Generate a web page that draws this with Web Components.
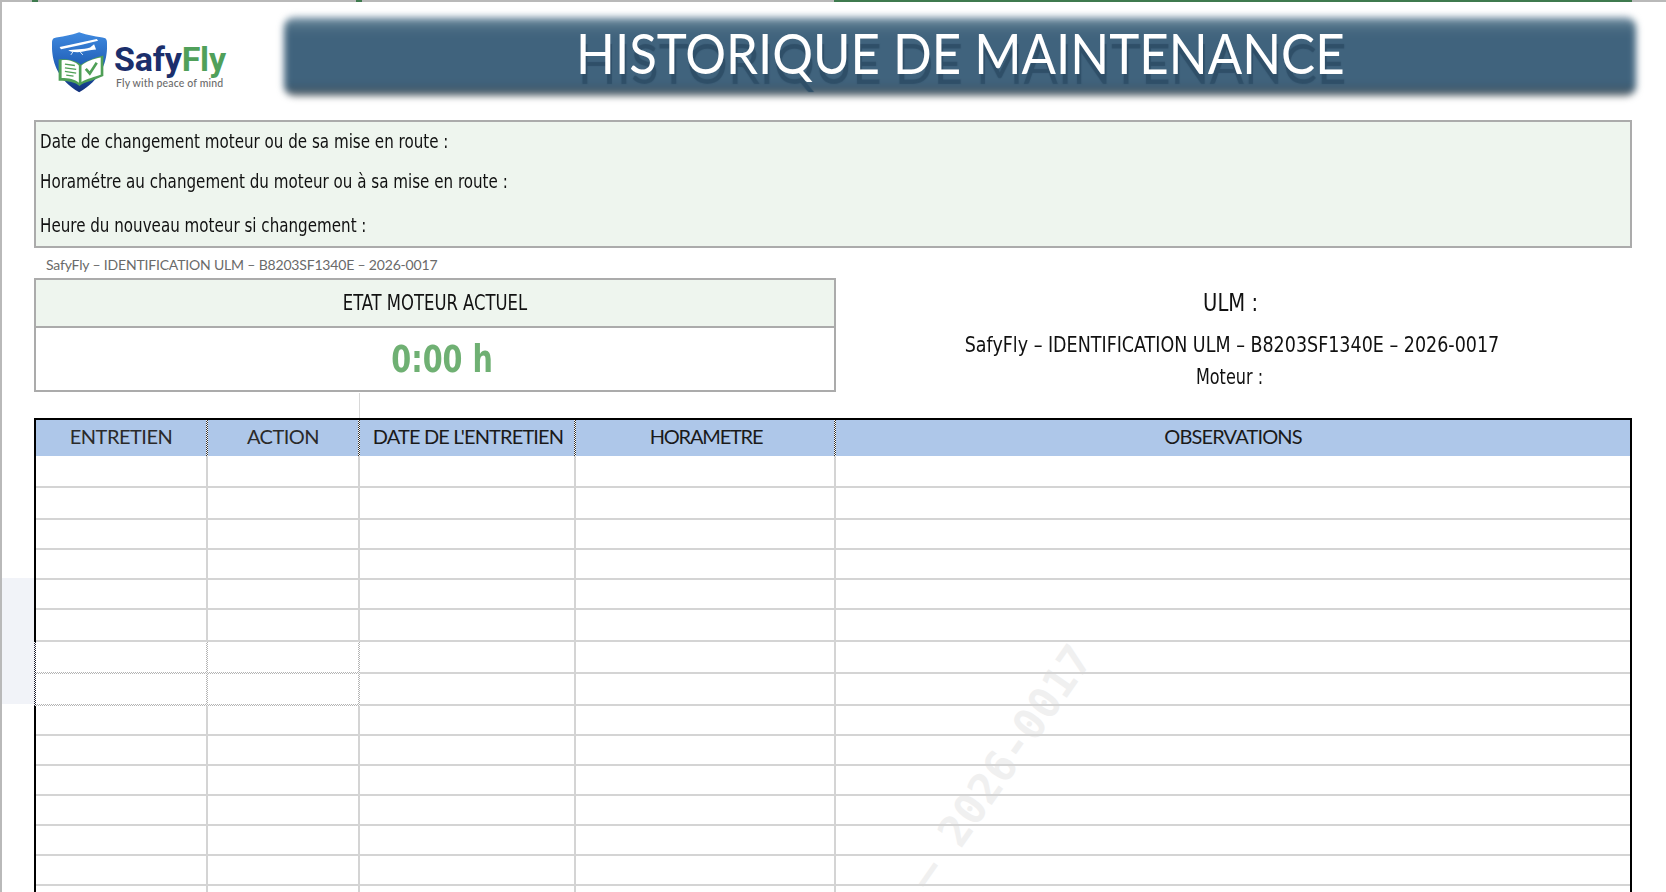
<!DOCTYPE html>
<html lang="fr">
<head>
<meta charset="utf-8">
<title>Historique de maintenance</title>
<style>
  html, body { margin: 0; background: #fff; height: 100%; overflow: hidden; }
  body { font-family: "Lato", "Liberation Sans", sans-serif; color: #111; }
</style>
</head>
<body>
<template id="safy-logo-tpl">
  <style>
    :host { display: flex; align-items: flex-start; gap: 7px; width: 190px; height: 61px; }
    svg { flex: none; width: 55px; height: 61px; }
    .name { font: 700 34px/38px "Roboto", sans-serif; color: #1b2f6c; letter-spacing: -0.2px; margin-top: 8px; }
    .name b { color: #50a05a; font-weight: 700; }
    .tag { font: 500 10.5px/13px "Lato", sans-serif; color: #6b6b6b; padding-left: 2px; margin-top: -1px; letter-spacing: 0.15px; }
  </style>
  <svg viewBox="35 40 166 182">
    <defs>
      <linearGradient id="sh" x1="0" y1="0" x2="0" y2="1">
        <stop offset="0" stop-color="#3f8ae0"/>
        <stop offset="0.6" stop-color="#1f5cb4"/>
        <stop offset="1" stop-color="#12307a"/>
      </linearGradient>
    </defs>
    <path d="M117 40 C140 49 175 53 196 58 C200 62 201 66 201 72 C203 120 190 180 117 221 C46 180 33 120 35 72 C35 66 36 62 40 58 C60 53 95 49 117 40 Z" fill="url(#sh)"/>
    <path d="M58 84 L170 60 L174 65 L122 78 L62 91 Z" fill="#fff"/>
    <path d="M84 94 C100 92 130 92 150 86 L162 76 L168 92 C150 92 130 100 112 100 C98 100 88 98 84 94 Z" fill="#fff"/>
    <path d="M98 99 L92 108 M120 99 L128 108" stroke="#fff" stroke-width="2.5" fill="none"/>
    <path d="M55 122 L55 186 C85 186 105 190 118 202 C132 190 160 186 190 172 L190 110 C170 115 140 125 122 138 C105 124 80 120 55 122 Z" fill="#4f9f57"/>
    <path d="M64 124 L64 178 C85 178 105 182 116 192 L116 140 C105 128 85 122 64 124 Z" fill="#fff"/>
    <path d="M124 140 L124 190 C140 180 165 174 182 168 L182 116 C160 120 138 128 124 140 Z" fill="#fff"/>
    <path d="M74 136 L104 140 M74 147 L108 152 M74 158 L108 163 M78 169 L100 172" stroke="#4f9f57" stroke-width="4" fill="none"/>
    <path d="M137 150 L149 164 L170 132" stroke="#4f9f57" stroke-width="8" fill="none"/>
  </svg>
  <div class="txt">
    <div class="name">Safy<b>Fly</b></div>
    <div class="tag">Fly with peace of mind</div>
  </div>
</template>

<template id="title-banner-tpl">
  <style>
    :host { display: flex; position: relative; height: 79px; align-items: center; justify-content: center; }
    :host::before {
      content: ""; position: absolute; inset: 0; border-radius: 10px;
      background: linear-gradient(#8aa2b5 0, #527388 10%, #40637d 22%, #40637d 82%, #3c5a70 90%, #6b6e70 100%);
      filter: blur(3.5px);
    }
    h1 {
      position: relative; margin: 0 0 7px;
      font: 400 56px/64px "Lato", sans-serif; color: #fff; white-space: nowrap;
      transform: scaleX(0.91);
      text-shadow: 2px 10px 1px #2f4f68;
    }
  </style>
  <h1><slot></slot></h1>
</template>

<template id="info-panel-tpl">
  <style>
    :host {
      display: flex; flex-direction: column; box-sizing: border-box; height: 128px;
      background: #eef5ee; border: 2px solid #ababab; padding: 7px 0 0 4px;
      font: 400 19px/24px "DejaVu Sans Condensed", "DejaVu Sans", sans-serif; font-stretch: condensed; color: #111;
    }
    ::slotted(div) { transform: scaleX(0.885); transform-origin: 0 50%; white-space: nowrap; }
    ::slotted(div:nth-child(2)) { margin-top: 16px; }
    ::slotted(div:nth-child(3)) { margin-top: 20px; }
  </style>
  <slot></slot>
</template>

<template id="engine-state-tpl">
  <style>
    :host {
      display: grid; grid-template-rows: 48px 1fr; box-sizing: border-box; width: 802px; height: 114px;
      border: 2px solid #ababab;
    }
    .head {
      display: flex; align-items: center; justify-content: center; background: #eef5ee; box-sizing: border-box;
      border-bottom: 2px solid #ababab;
      font: 400 21px "DejaVu Sans Condensed", "DejaVu Sans", sans-serif; font-stretch: condensed;
    }
    .val {
      display: flex; align-items: center; justify-content: center; padding-left: 15px;
      font: 700 37px "DejaVu Sans Condensed", "DejaVu Sans", sans-serif; font-stretch: condensed; color: #6fb073;
    }
    .head span { transform: scaleX(0.87); }
    .val span { transform: scaleX(0.86); }
  </style>
  <div class="head"><span><slot name="head"></slot></span></div>
  <div class="val"><span><slot name="val"></slot></span></div>
</template>

<template id="ulm-info-tpl">
  <style>
    :host {
      display: flex; flex-direction: column; align-items: center; flex: 1; padding-right: 5px;
      font-family: "DejaVu Sans Condensed", "DejaVu Sans", sans-serif; font-stretch: condensed; color: #111;
      white-space: nowrap;
    }
    ::slotted(.l1) { font-size: 25px; line-height: 28px; margin-top: 11px; transform: scaleX(0.87); margin-right: 2px; }
    ::slotted(.l2) { font-size: 22px; line-height: 28px; margin-top: 14px; transform: scaleX(0.885); }
    ::slotted(.l3) { font-size: 21px; line-height: 28px; margin-top: 4px; transform: scaleX(0.85); margin-right: 4px; }
  </style>
  <slot></slot>
</template>

<template id="maint-sheet-tpl">
  <style>
    :host {
      display: block; position: relative; box-sizing: border-box; width: 1598px; height: 474px;
      border-top: 2px solid #000; border-right: 2px solid #000;
      overflow: hidden;
    }
    .wm {
      position: absolute; right: 548px; top: 206px; white-space: nowrap;
      font: 700 43px/48px "DejaVu Sans Mono", monospace; color: #f0f0f0;
      transform-origin: 100% 50%; transform: rotate(-55deg);
    }
    #rows { position: relative; }
    .row { display: grid; grid-template-columns: 172px 152px 216px 260px 1fr; box-sizing: border-box; border-left: 2px solid #000; }
    .row.body > div { border-right: 2px solid #d4d4d4; border-bottom: 2px solid #d4d4d4; box-sizing: border-box; }
    .row.body > div:last-child { border-right: 0; }
    .row.dotted {
      border-left-color: transparent;
      background: repeating-conic-gradient(#223 0 25%, #fff 0 50%) 0 0/2px 2px repeat-y;
      background-origin: border-box; background-clip: border-box;
    }
    /* the two selected rows: checker strip on right and bottom of first cells */
    .row.dotted > div:nth-child(-n+2) {
      border: 0;
      background:
        linear-gradient(#fff, #fff) 0 0/calc(100% - 2px) calc(100% - 2px) no-repeat,
        repeating-conic-gradient(#b4b4b4 0 25%, #fff 0 50%) 0 0/2px 2px;
    }
    .head { height: 36px; background: #aec7e9; }
    .head > div {
      display: flex; align-items: center; justify-content: center; box-sizing: border-box; padding-bottom: 5px;
      font: 400 20px "Lato", sans-serif; color: #1a1a1a; letter-spacing: -0.85px;
      background:
        linear-gradient(#aec7e9, #aec7e9) 0 0/calc(100% - 2px) 100% no-repeat,
        repeating-conic-gradient(#333 0 25%, #fff 0 50%) 0 0/2px 2px;
    }
    .head > div:nth-child(-n+2) { color: #2a2a2a; letter-spacing: -0.5px; padding-right: 2px; }
    .head > div:nth-child(4) { letter-spacing: -1.2px; }
    .head > div:last-child { background: none; }
  </style>
  <div class="wm">SafyFly – IDENTIFICATION ULM – B8203SF1340E – 2026-0017</div>
  <div id="rows"></div>
</template>

<template id="maint-page-tpl">
  <style>
    :host { display: block; box-sizing: border-box; width: 1666px; height: 892px; position: relative; overflow: hidden; background: #fff; }
    .topline { display: flex; height: 2px; }
    .topline span { display: block; background: #b9b9b9; }
    .topline span.g { background: #3e7a4e; }
    .main { border-left: 2px solid #b9b9b9; height: 890px; box-sizing: border-box; padding-left: 32px; }
    .head { display: flex; align-items: center; height: 118px; }
    .head ::slotted(safy-logo) { margin: 2px 0 0 18px; }
    .head ::slotted(title-banner) { margin-left: 42px; width: 1352px; margin-top: -9px; }
    .body { width: 1598px; }
    .id { font: 400 14px/20px "Lato", sans-serif; letter-spacing: -0.18px; color: #6a6a6a; height: 30px; padding: 7px 0 0 12px; box-sizing: border-box; }
    .mid { display: flex; height: 140px; align-items: flex-start; }
    .side { position: absolute; left: 2px; top: 578px; width: 32px; height: 126px; background: #f1f3f8; }
    .tick { position: absolute; left: 359px; top: 393px; height: 25px; border-left: 1px solid #d8d8d8; }
  </style>
  <div class="topline">
    <span style="width:32px"></span><span class="g" style="width:6px"></span>
    <span style="width:318px"></span><span class="g" style="width:6px"></span>
    <span style="width:472px"></span><span class="g" style="width:798px"></span>
    <span style="flex:1"></span>
  </div>
  <div class="side"></div>
  <div class="tick"></div>
  <div class="main">
    <div class="head"><slot name="logo"></slot><slot name="banner"></slot></div>
    <div class="body">
      <slot name="info"></slot>
      <div class="id"><slot name="id"></slot></div>
      <div class="mid"><slot name="state"></slot><slot name="ulm"></slot></div>
      <slot name="sheet"></slot>
    </div>
  </div>
</template>

<maint-page>
  <safy-logo slot="logo"></safy-logo>
  <title-banner slot="banner">HISTORIQUE DE MAINTENANCE</title-banner>
  <info-panel slot="info">
    <div>Date de changement moteur ou de sa mise en route :</div>
    <div>Horamétre au changement du moteur ou à sa mise en route :</div>
    <div>Heure du nouveau moteur si changement :</div>
  </info-panel>
  <span slot="id">SafyFly – IDENTIFICATION ULM – B8203SF1340E – 2026-0017</span>
  <engine-state slot="state">
    <span slot="head">ETAT MOTEUR ACTUEL</span>
    <span slot="val">0:00 h</span>
  </engine-state>
  <ulm-info slot="ulm">
    <div class="l1">ULM :</div>
    <div class="l2">SafyFly – IDENTIFICATION ULM – B8203SF1340E – 2026-0017</div>
    <div class="l3">Moteur :</div>
  </ulm-info>
  <maint-sheet slot="sheet"></maint-sheet>
</maint-page>

<script>
  function defineFromTemplate(tag, tplId, setup) {
    customElements.define(tag, class extends HTMLElement {
      constructor() {
        super();
        this.attachShadow({ mode: 'open' });
        this.shadowRoot.appendChild(document.getElementById(tplId).content.cloneNode(true));
        if (setup) setup(this.shadowRoot);
      }
    });
  }

  defineFromTemplate('safy-logo', 'safy-logo-tpl');
  defineFromTemplate('title-banner', 'title-banner-tpl');
  defineFromTemplate('info-panel', 'info-panel-tpl');
  defineFromTemplate('engine-state', 'engine-state-tpl');
  defineFromTemplate('ulm-info', 'ulm-info-tpl');
  defineFromTemplate('maint-page', 'maint-page-tpl');

  // row heights read from the reference, rows 6 and 7 are the selected ones
  const ROW_HEIGHTS = [32, 32, 30, 30, 30, 32, 32, 32, 30, 30, 30, 30, 30, 30, 30];
  defineFromTemplate('maint-sheet', 'maint-sheet-tpl', (root) => {
    const rows = root.getElementById('rows');
    const head = document.createElement('div');
    head.className = 'row head';
    ['ENTRETIEN', 'ACTION', "DATE DE L'ENTRETIEN", 'HORAMETRE', 'OBSERVATIONS'].forEach((t) => {
      const c = document.createElement('div');
      c.textContent = t;
      head.appendChild(c);
    });
    rows.appendChild(head);
    ROW_HEIGHTS.forEach((h, i) => {
      const r = document.createElement('div');
      r.className = 'row body' + (i === 6 || i === 7 ? ' dotted' : '');
      r.style.height = h + 'px';
      for (let c = 0; c < 5; c++) r.appendChild(document.createElement('div'));
      rows.appendChild(r);
    });
  });
</script>
</body>
</html>
